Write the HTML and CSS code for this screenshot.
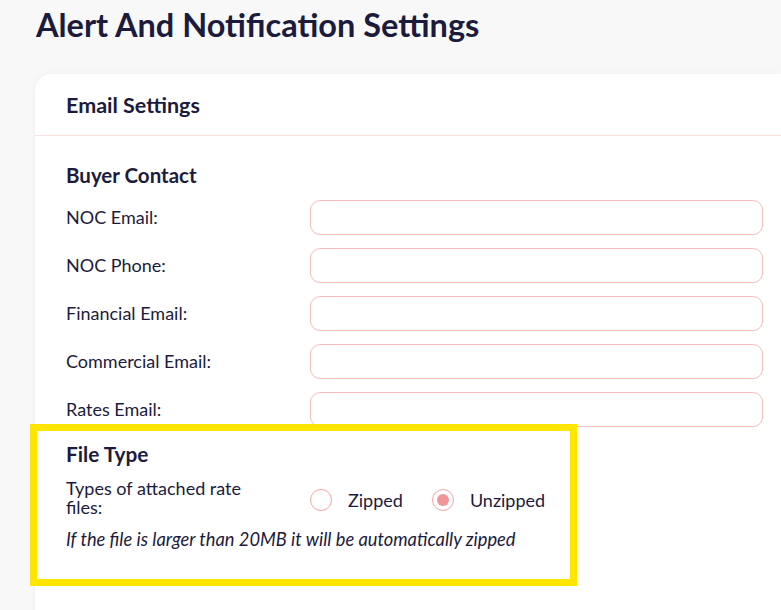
FILE: index.html
```html
<!DOCTYPE html>
<html>
<head>
<meta charset="utf-8">
<link rel="stylesheet" href="styles.css">
</head>
<body>
<div class="page">
  <h1 class="title">Alert And Notification Settings</h1>
  <div class="card">
    <div class="card-header">Email Settings</div>
    <div class="card-body">
      <h2 class="section-title">Buyer Contact</h2>
      <div class="rows">
        <div class="row"><label class="label">NOC Email:</label><input class="input" type="text"></div>
        <div class="row"><label class="label">NOC Phone:</label><input class="input" type="text"></div>
        <div class="row"><label class="label">Financial Email:</label><input class="input" type="text"></div>
        <div class="row"><label class="label">Commercial Email:</label><input class="input" type="text"></div>
        <div class="row"><label class="label">Rates Email:</label><input class="input" type="text"></div>
      </div>
      <div class="filetype">
        <h2 class="section-title ft-title">File Type</h2>
        <div class="radio-row">
          <div class="label wrap">Types of attached rate files:</div>
          <div class="radios">
            <span class="radio"><span class="circle"></span>Zipped</span>
            <span class="radio"><span class="circle checked"></span>Unzipped</span>
          </div>
        </div>
        <p class="note">If the file is larger than 20MB it will be automatically zipped</p>
      </div>
    </div>
  </div>
</div>
</body>
</html>
```
FILE: styles.css
```css
html, body {
  margin: 0;
  padding: 0;
  height: 100%;
  overflow: hidden;
}
body {
  background: #f8f8f8;
  font-family: Lato, "Noto Sans", sans-serif;
  color: #1c1b3d;
}
.page {
  padding-left: 35px;
}
.title {
  margin: 0;
  padding: 4px 0 0 1px;
  font-size: 32.5px;
  font-weight: 700;
  line-height: 42px;
  color: #1c1b3d;
}
.card {
  margin-top: 28px;
  background: #fff;
  border-radius: 16px 0 0 0;
  box-shadow: 0 0 6px rgba(0, 0, 0, 0.04);
  min-height: 560px;
}
.card-header {
  height: 61px;
  display: flex;
  align-items: center;
  padding-left: 31px;
  font-size: 21.5px;
  font-weight: 700;
  border-bottom: 1px solid #fbdede;
}
.card-body {
  padding: 26px 18px 0 31px;
}
.section-title {
  margin: 0;
  font-size: 20.5px;
  font-weight: 700;
  line-height: 26px;
}
.ft-title {
  font-size: 20.8px;
}
.rows {
  margin-top: 12px;
  display: flex;
  flex-direction: column;
  gap: 13px;
}
.row {
  display: flex;
  align-items: center;
}
.label {
  width: 244px;
  flex-shrink: 0;
  font-size: 18px;
  line-height: 19px;
}
.label.wrap {
  box-sizing: border-box;
  padding-right: 50px;
}
.input {
  flex: 1;
  height: 35px;
  box-sizing: border-box;
  border: 1px solid #f6bdbd;
  border-radius: 10px;
  background: #fff;
  outline: none;
}
.filetype {
  position: relative;
  padding-top: 14px;
}
.filetype::after {
  content: "";
  position: absolute;
  left: -36px;
  top: -3px;
  width: 547px;
  height: 162px;
  box-sizing: border-box;
  border: 7px solid #ffe500;
  pointer-events: none;
}
.radio-row {
  margin-top: 12px;
  display: flex;
  align-items: center;
}
.radios {
  display: flex;
  gap: 29px;
  font-size: 18px;
  padding-top: 3px;
}
.radio {
  display: flex;
  align-items: center;
  gap: 16px;
}
.circle {
  width: 22px;
  height: 22px;
  box-sizing: border-box;
  border: 1px solid #f3a5a5;
  border-radius: 50%;
  display: flex;
  align-items: center;
  justify-content: center;
}
.circle.checked::before {
  content: "";
  width: 12px;
  height: 12px;
  border-radius: 50%;
  background: #f1959a;
}
.note {
  margin: 11px 0 0;
  font-style: italic;
  font-size: 18.3px;
  line-height: 22px;
}
```
